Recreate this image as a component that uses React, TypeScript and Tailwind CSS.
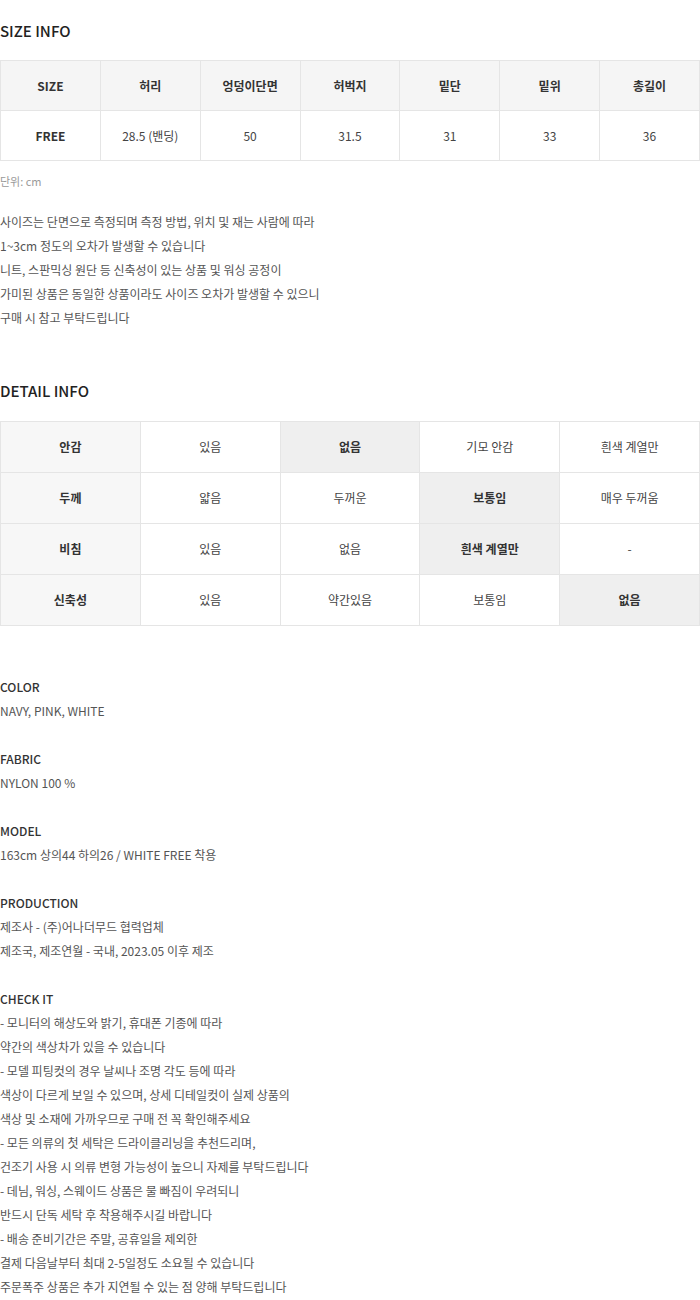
import React from 'react';

const sizeHead = ['SIZE', '허리', '엉덩이단면', '허벅지', '밑단', '밑위', '총길이'];
const sizeRow = ['FREE', '28.5 (밴딩)', '50', '31.5', '31', '33', '36'];

// [text, highlighted]
const detailRows: { label: string; cells: [string, boolean][] }[] = [
    { label: '안감', cells: [['있음', false], ['없음', true], ['기모 안감', false], ['흰색 계열만', false]] },
    { label: '두께', cells: [['얇음', false], ['두꺼운', false], ['보통임', true], ['매우 두꺼움', false]] },
    { label: '비침', cells: [['있음', false], ['없음', false], ['흰색 계열만', true], ['-', false]] },
    { label: '신축성', cells: [['있음', false], ['약간있음', false], ['보통임', false], ['없음', true]] },
];

const infoBlocks: { title: string; lines: string[] }[] = [
    { title: 'COLOR', lines: ['NAVY, PINK, WHITE'] },
    { title: 'FABRIC', lines: ['NYLON 100 %'] },
    { title: 'MODEL', lines: ['163cm 상의44 하의26 / WHITE FREE 착용'] },
    { title: 'PRODUCTION', lines: ['제조사 - (주)어나더무드 협력업체', '제조국, 제조연월 - 국내, 2023.05 이후 제조'] },
    {
        title: 'CHECK IT',
        lines: [
            '- 모니터의 해상도와 밝기, 휴대폰 기종에 따라',
            '약간의 색상차가 있을 수 있습니다',
            '- 모델 피팅컷의 경우 날씨나 조명 각도 등에 따라',
            '색상이 다르게 보일 수 있으며, 상세 디테일컷이 실제 상품의',
            '색상 및 소재에 가까우므로 구매 전 꼭 확인해주세요',
            '- 모든 의류의 첫 세탁은 드라이클리닝을 추천드리며,',
            '건조기 사용 시 의류 변형 가능성이 높으니 자제를 부탁드립니다',
            '- 데님, 워싱, 스웨이드 상품은 물 빠짐이 우려되니',
            '반드시 단독 세탁 후 착용해주시길 바랍니다',
            '- 배송 준비기간은 주말, 공휴일을 제외한',
            '결제 다음날부터 최대 2-5일정도 소요될 수 있습니다',
            '주문폭주 상품은 추가 지연될 수 있는 점 양해 부탁드립니다',
        ],
    },
];

export default function App() {
    return (
        <div
            className="w-[700px] bg-white text-[12px] leading-[24px] text-[#555]"
            style={{ fontFamily: '"Noto Sans CJK KR", "Noto Sans", sans-serif' }}
        >
            {/* Size info */}
            <h2 className="pt-[18px] text-[15px] leading-[26px] font-medium text-[#222]">SIZE INFO</h2>
            <table className="mt-[16px] w-full table-fixed border-collapse">
                <thead>
                    <tr className="h-[50px] bg-[#f5f5f5]">
                        {sizeHead.map(h => (
                            <th key={h} className="border border-[#e5e5e5] text-center font-bold text-[#333]">{h}</th>
                        ))}
                    </tr>
                </thead>
                <tbody>
                    <tr className="h-[50px]">
                        {sizeRow.map((c, i) => (
                            <td
                                key={i}
                                className={i === 0
                                    ? 'border border-[#e5e5e5] text-center font-bold text-[#333]'
                                    : 'border border-[#e5e5e5] text-center text-[#444]'}
                            >
                                {c}
                            </td>
                        ))}
                    </tr>
                </tbody>
            </table>
            <p className="mt-[8px] text-[11px] text-[#999]">단위: cm</p>

            <div className="mt-[17px] text-[#555]">
                <p>사이즈는 단면으로 측정되며 측정 방법, 위치 및 재는 사람에 따라</p>
                <p>1~3cm 정도의 오차가 발생할 수 있습니다</p>
                <p>니트, 스판믹싱 원단 등 신축성이 있는 상품 및 워싱 공정이</p>
                <p>가미된 상품은 동일한 상품이라도 사이즈 오차가 발생할 수 있으니</p>
                <p>구매 시 참고 부탁드립니다</p>
            </div>

            {/* Detail info */}
            <h2 className="mt-[48px] text-[15px] leading-[26px] font-medium text-[#222]">DETAIL INFO</h2>
            <table className="mt-[17px] w-full table-fixed border-collapse">
                <tbody>
                    {detailRows.map(row => (
                        <tr key={row.label} className="h-[51px]">
                            <td className="border border-[#e5e5e5] bg-[#f7f7f7] text-center font-bold text-[#333]">{row.label}</td>
                            {row.cells.map(([text, on], i) => (
                                <td
                                    key={i}
                                    className={on
                                        ? 'border border-[#e5e5e5] bg-[#efefef] text-center font-bold text-[#333]'
                                        : 'border border-[#e5e5e5] text-center text-[#444]'}
                                >
                                    {text}
                                </td>
                            ))}
                        </tr>
                    ))}
                </tbody>
            </table>

            {/* Product info */}
            <div className="mt-[49px] flex flex-col gap-[24px] pb-[2px]">
                {infoBlocks.map(b => (
                    <div key={b.title}>
                        <p className="font-medium text-[#333]">{b.title}</p>
                        {b.lines.map((l, i) => (
                            <p key={i}>{l}</p>
                        ))}
                    </div>
                ))}
            </div>
        </div>
    );
}
